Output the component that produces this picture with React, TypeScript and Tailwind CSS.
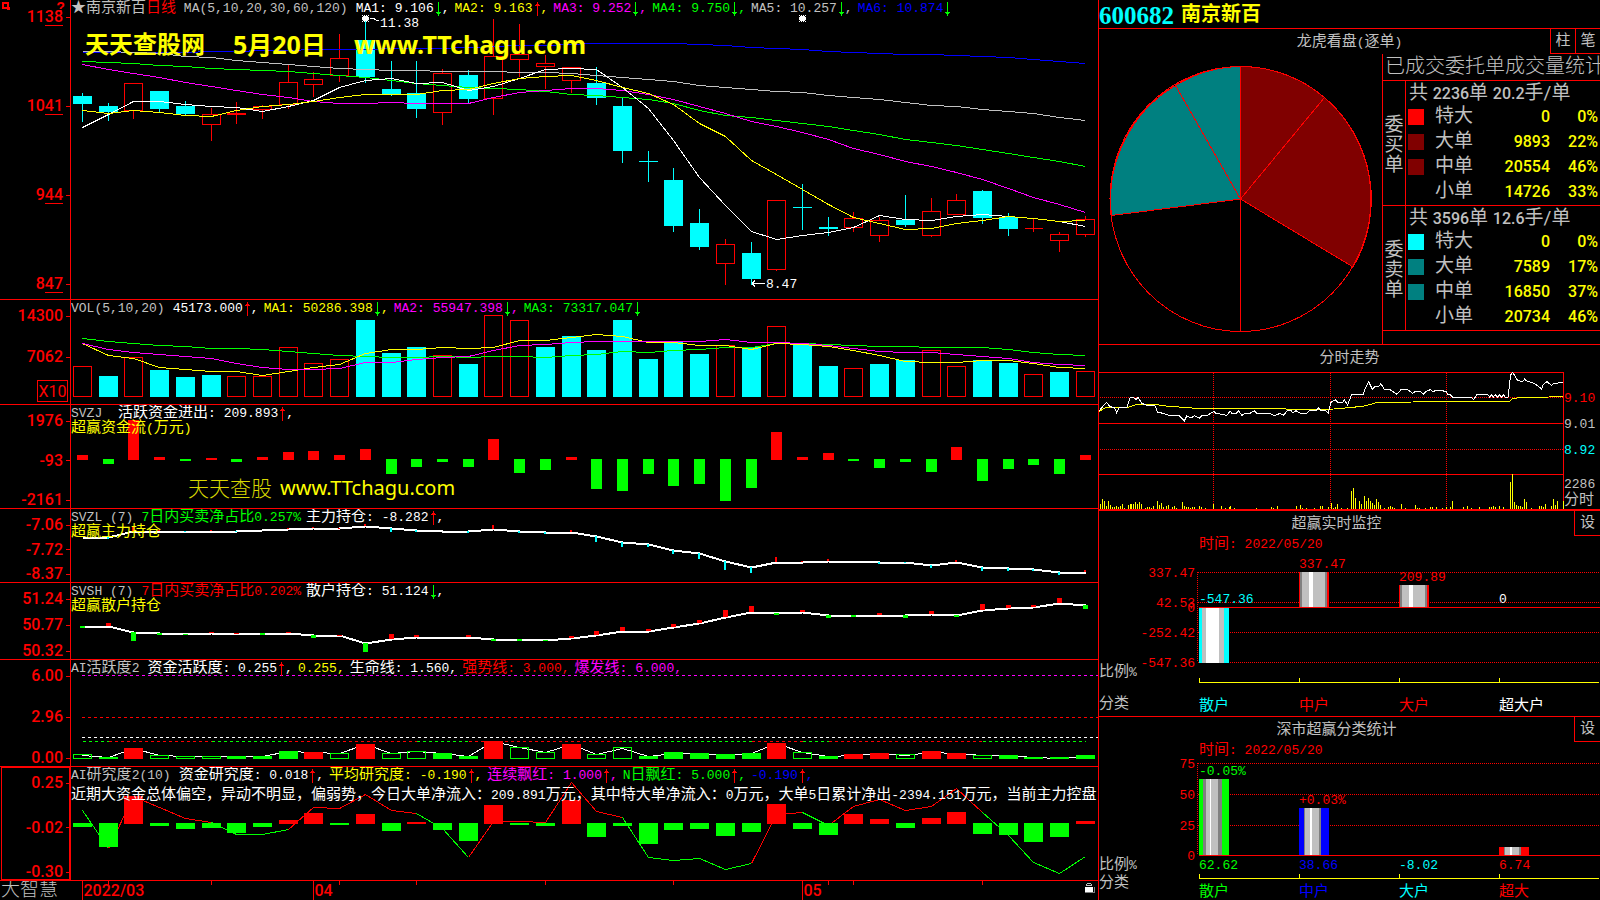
import type { ReactNode } from "react";

const RED = "#ff0000";
const GREEN = "#00ff00";
const CYAN = "#00ffff";
const YELLOW = "#ffff00";
const MAGENTA = "#ff00ff";
const BLUE = "#0000ff";
const GRAY = "#c0c0c0";
const WHITE = "#ffffff";

// Plot area: 40 bars spread over 1027 units, starting right of the axis column
const LEFT = 71;
const WIDTH = 1027;
const barX = (i: number) => Math.round(82 + 25.715 * i) + 0.5;

// Levels are stored in thirds of a row, counted from the top of a band of panels
const level = (origin: number) => (v: number) => Math.round(origin + v / 3);
const priceY = level(0);
const flowY = level(295);
const aiY = level(580);

// [hollow/filled, high, top, bottom, low]
const candles: [string, number, number, number, number][] = [
  ["c", 93, 96, 104, 121], ["c", 103, 106, 112, 120], ["r", 83, 83, 110, 118], ["c", 91, 91, 109, 111],
  ["c", 101, 106, 114, 115], ["r", 108, 114, 124, 140], ["r", 102, 113, 114, 123], ["r", 105, 106, 109, 118],
  ["r", 65, 82, 104, 108], ["r", 72, 79, 84, 96], ["r", 34, 58, 75, 81], ["c", 21, 40, 77, 82],
  ["c", 61, 89, 94, 95], ["c", 61, 93, 109, 117], ["r", 69, 73, 112, 124], ["c", 70, 75, 99, 102],
  ["r", 19, 56, 98, 114], ["r", 24, 54, 59, 76], ["r", 55, 63, 66, 88], ["r", 67, 67, 80, 92],
  ["c", 67, 83, 98, 104], ["c", 98, 106, 151, 162], ["c", 151, 161, 162, 181], ["c", 168, 180, 226, 231],
  ["c", 209, 223, 247, 249], ["r", 239, 244, 263, 284], ["c", 242, 253, 279, 284], ["r", 200, 200, 269, 270],
  ["c", 184, 207, 208, 229], ["c", 217, 227, 229, 235], ["r", 212, 218, 227, 231], ["r", 217, 220, 235, 241],
  ["c", 195, 220, 225, 226], ["r", 198, 211, 235, 236], ["r", 194, 200, 214, 214], ["c", 190, 191, 218, 223],
  ["c", 213, 217, 229, 235], ["r", 218, 228, 228, 231], ["r", 232, 234, 240, 251], ["r", 216, 219, 234, 236],
];

const priceMa: [string, number[]][] = [
  [BLUE, [157, 157, 157, 156, 155, 154, 152, 150, 149, 148, 147, 146, 145, 144, 143, 142, 139, 136, 135, 131, 130, 130, 130, 130, 132, 134, 140, 143, 148, 152, 155, 158, 161, 163, 166, 169, 172, 178, 183, 190]],
  [GRAY, [152, 154, 157, 160, 167, 172, 179, 187, 193, 199, 203, 208, 209, 211, 212, 213, 214, 216, 217, 220, 224, 230, 236, 244, 254, 260, 266, 272, 276, 285, 292, 298, 307, 314, 319, 326, 333, 340, 350, 360]],
  [GREEN, [184, 187, 190, 196, 199, 203, 206, 210, 213, 220, 226, 232, 240, 250, 256, 261, 265, 268, 272, 281, 286, 292, 298, 310, 330, 344, 352, 359, 368, 379, 391, 403, 418, 427, 436, 446, 458, 470, 483, 498]],
  [MAGENTA, [193, 207, 220, 232, 247, 258, 270, 282, 291, 303, 309, 310, 307, 310, 310, 308, 290, 276, 271, 265, 265, 271, 281, 298, 319, 338, 364, 378, 397, 418, 443, 463, 484, 499, 517, 536, 563, 590, 613, 637]],
  [WHITE, [382, 343, 303, 304, 312, 318, 320, 334, 317, 299, 262, 241, 235, 250, 247, 270, 258, 235, 208, 205, 206, 262, 325, 420, 530, 616, 693, 718, 705, 695, 680, 646, 657, 661, 647, 642, 648, 654, 663, 677]],
  [YELLOW, [331, 340, 331, 335, 346, 349, 331, 319, 311, 304, 292, 281, 283, 283, 270, 266, 248, 235, 229, 226, 240, 260, 280, 312, 368, 408, 480, 522, 566, 612, 650, 670, 688, 685, 670, 661, 647, 655, 664, 660]],
];

const volume =
  "r214 c243 r187 c225 c246 c240 r244 r244 r157 r205 r193 c75 c174 c156 r181 c207 r61 r76 c156 c123 c165 c75 c192 c140 c177 r151 c156 r94 c150 c213 r220 c207 c195 r166 r214 c195 c204 r238 c231 r229";

const volumeMa: [string, number[]][] = [
  [GREEN, [130, 139, 143, 151, 154, 159, 160, 163, 167, 175, 181, 182, 187, 187, 184, 186, 184, 184, 187, 181, 177, 169, 172, 166, 162, 156, 155, 145, 145, 146, 150, 154, 154, 157, 157, 157, 163, 171, 176, 181]],
  [YELLOW, [145, 180, 190, 215, 222, 228, 229, 240, 227, 217, 208, 175, 163, 162, 157, 160, 157, 136, 135, 125, 118, 122, 142, 141, 151, 149, 163, 145, 148, 152, 166, 180, 199, 202, 201, 196, 196, 204, 216, 220]],
  [MAGENTA, [143, 162, 172, 178, 184, 188, 205, 217, 223, 221, 220, 202, 202, 193, 187, 184, 166, 149, 147, 142, 139, 139, 139, 139, 139, 133, 142, 142, 144, 150, 160, 169, 170, 172, 178, 182, 188, 201, 208, 211]],
];

const flow =
  "r480 g507 r375 r486 g498 r489 g501 r486 r471 r468 r480 r462 g537 g516 g501 g516 r432 g534 g525 r486 g582 g588 g537 g573 g567 g618 g579 r411 r486 r474 g498 g519 g501 g531 r456 g558 g522 g510 g537 r480";

const mainLine = [725, 725, 708, 708, 708, 708, 708, 706, 703, 699, 698, 694, 699, 706, 707, 709, 701, 707, 711, 710, 724, 740, 748, 764, 775, 799, 816, 801, 801, 797, 799, 801, 801, 810, 802, 815, 820, 823, 831, 831];
const mainTicks =
  "1c731 2r696 3r705 4c711 5r705 6c711 8r699 9r696 10r701 11r687 12c711 13c711 15c713 16r690 17c713 18c716 19r706 20c741 21c756 22c756 23c777 24c792 25c825 26c834 27r786 28r798 29r792 31c807 32c805 33c819 34r795 35c828 36c828 37c827 38c840 39r825";

const retailLine = [138, 138, 157, 160, 162, 160, 159, 160, 159, 165, 165, 189, 177, 171, 170, 170, 176, 178, 180, 175, 165, 154, 152, 142, 130, 112, 95, 100, 95, 104, 105, 105, 105, 101, 106, 89, 83, 80, 68, 75];
const retailTicks =
  "0g143 1r129 2g183 3g164 4g165 5r156 6r158 7g164 8r156 9g173 10r165 11g215 12r162 13r165 15r165 16g182 17g182 18g183 19r168 20r153 21r141 22r147 23r132 24r120 25r90 26r78 27g104 28r90 29g114 30g110 31r99 32g114 33r93 34g110 35r72 36r75 37r75 38r54 39g87";

// o = outlined green
const activity =
  "o523 g531 r504 o526 o529 o529 g528 g528 g513 r516 o520 r492 o520 o514 g519 g528 r483 o502 o517 r492 o523 o502 g528 g516 g519 g522 g519 r489 o517 g528 r522 r519 o523 r513 r519 o526 g525 g531 g531 g525";
const activityLine = [525, 531, 505, 525, 529, 529, 529, 529, 514, 516, 519, 492, 519, 514, 519, 528, 483, 502, 517, 492, 522, 503, 528, 518, 519, 524, 519, 489, 515, 527, 524, 519, 524, 516, 519, 526, 525, 531, 533, 527];

const research =
  "g741 g801 r648 g738 g747 g744 g759 g741 r720 r699 g735 r702 g753 r726 g750 g783 r675 g735 g738 r660 g771 g738 g792 g750 g747 g768 g756 r672 g747 g765 r702 r717 g744 r714 r696 g762 g765 g786 g771 r723";
const researchLine = [690, 803, 648, 682, 715, 727, 763, 763, 748, 682, 685, 643, 690, 700, 744, 832, 722, 722, 727, 607, 693, 712, 832, 841, 835, 868, 848, 702, 697, 735, 679, 658, 691, 679, 625, 697, 765, 847, 878, 828];

// Trend colour changes at these bars, green first
const turns = [0, 1, 5, 8, 13, 15, 21, 26, 28, 29, 35, 39];

const minutePrice =
  "10,212 20,200 32,187 42,200 55,203 62,218 70,203 92,203 103,172 112,172 120,178 126,172 137,190 150,195 178,198 184,216 193,218 220,226 250,228 265,243 272,228 285,234 295,227 310,235 318,227 335,226 353,214 360,220 393,226 402,213 408,220 420,220 428,213 438,226 447,220 462,220 475,212 482,220 520,220 535,227 553,220 562,226 574,212 585,212 590,218 600,212 613,220 632,220 640,212 660,212 668,204 675,211 690,213 697,219 705,187 718,179 725,187 740,187 745,180 755,195 767,163 802,163 806,150 818,125 829,148 838,139 848,139 855,131 865,148 882,149 903,163 915,149 935,149 950,160 958,154 973,154 982,163 990,154 1003,149 1012,155 1020,150 1050,154 1056,163 1062,163 1070,172 1126,172 1133,178 1142,165 1175,164 1182,172 1186,165 1192,171 1198,164 1205,171 1212,164 1216,172 1222,164 1228,172 1236,172 1244,105 1250,97 1265,122 1280,124 1286,117 1292,123 1315,130 1337,147 1342,133 1353,125 1367,137 1372,130 1402,128";
const minuteAvg =
  "10,214 28,203 95,202 120,194 180,194 210,198 260,202 300,205 540,206 600,208 715,207 770,202 805,198 845,187 950,186 1240,184 1250,176 1275,172 1360,171 1402,169";
const minuteVol =
  "13,16 19,31 25,24 31,10 37,25 43,13 49,7 55,7 61,10 67,5 73,9 80,14 86,4 97,13 103,16 106,16 112,16 118,22 124,16 130,22 136,16 148,4 154,7 160,7 166,4 172,9 184,25 190,13 196,18 203,7 210,10 217,13 229,7 235,10 241,4 259,22 265,10 271,7 277,7 283,4 289,7 295,7 310,10 316,7 328,4 352,15 377,9 389,4 401,7 404,10 415,4 481,4 526,7 532,4 544,9 601,9 613,13 619,4 631,4 655,4 673,9 679,10 697,7 706,19 712,4 718,7 724,16 736,4 754,4 767,55 772,64 778,34 790,25 796,16 805,40 811,25 817,34 823,25 829,19 835,13 841,31 847,22 853,13 865,4 877,7 883,10 889,7 895,4 916,16 928,4 958,13 964,4 970,4 988,4 1003,7 1009,7 1021,7 1039,4 1051,7 1063,7 1069,25 1102,7 1114,10 1126,4 1150,7 1180,7 1186,7 1192,9 1198,5 1210,9 1222,5 1243,82 1249,106 1255,22 1261,13 1267,10 1273,10 1279,7 1285,31 1291,22 1306,4 1330,10 1336,10 1342,7 1348,16 1366,10 1372,31 1378,13 1384,25 1402,25";

const pairs = (s: string) => s.split(" ").map(p => p.split(",").map(Number));
const bars = (s: string) => s.split(" ").map(p => ({ kind: p[0], v: Number(p.slice(1)) }));
const CJK = /([★\u2e80-\u9fff\uff00-\uffef]+)/;
const ink: Record<string, string> = { r: RED, g: GREEN, o: GREEN, c: CYAN };

/* ---------- text ---------- */

function Mixed({ children }: { children: string }) {
  return (
    <>
      {children.split(CJK).map((part, i) =>
        i % 2 ? <span key={i} className="text-[15px]">{part}</span> : part
      )}
    </>
  );
}

function Arrow({ dir }: { dir: "up" | "down" }) {
  return (
    <svg width="8" height="14" viewBox="0 0 8 14" className="inline-block shrink-0" shapeRendering="crispEdges">
      {dir === "up" ? (
        <path d="M4 0h1v14h-1zM3 2h3v1h-3zM2 3h5v1h-5z" fill={RED} />
      ) : (
        <path d="M4 0h1v14h-1zM3 11h3v1h-3zM2 10h5v1h-5z" fill={GREEN} />
      )}
    </svg>
  );
}

interface LegendItem {
  text: string;
  color: string;
  dir?: "up" | "down";
  end?: string;
}

function Legend({ name, items }: { name: ReactNode; items: LegendItem[] }) {
  return (
    <div className="flex items-center whitespace-pre leading-[15px]">
      <span className="mr-2 text-[#c0c0c0]">{name}</span>
      {items.map((it, i) => (
        <span key={i} className="mr-[5px] flex items-center" style={{ color: it.color }}>
          <span><Mixed>{it.text}</Mixed></span>
          {it.dir && <Arrow dir={it.dir} />}
          {it.end ?? ","}
        </span>
      ))}
    </div>
  );
}

/* ---------- left side ---------- */

function AxisLabel({ children, underline }: { children: string; underline?: boolean }) {
  return (
    <div className="flex items-center justify-end gap-[3px]">
      <span className="relative font-['Roboto',sans-serif] text-[16px] font-medium leading-4">
        {children}
        {underline && <span className="absolute -bottom-px right-0 h-px w-[18px] bg-[#ff0000]" />}
      </span>
      <span className="h-px w-1 bg-[#ff0000]" />
    </div>
  );
}

interface PanelProps {
  top: number;
  height: string;
  rows: number;
  axis: ReactNode;
  axisClass?: string;
  legend: ReactNode;
  children: ReactNode;
}

function Panel({ top, height, rows, axis, axisClass = "justify-between pt-2", legend, children }: PanelProps) {
  return (
    <section className={`flex border-b border-[#ff0000] ${height}`}>
      <div className={`relative flex w-[71px] shrink-0 flex-col border-r border-[#ff0000] text-[#ff0000] ${axisClass}`}>
        {axis}
      </div>
      <div className="relative min-w-0 flex-1 overflow-hidden">
        <svg
          className="block h-full w-full"
          viewBox={`${LEFT} ${top} ${WIDTH} ${rows}`}
          preserveAspectRatio="none"
          shapeRendering="crispEdges"
        >
          {children}
        </svg>
        <div className="absolute left-0 top-px">{legend}</div>
      </div>
    </section>
  );
}

function Line({ data, y, color, width = 1 }: { data: number[]; y: (v: number) => number; color: string; width?: number }) {
  return (
    <polyline
      points={data.map((v, i) => `${barX(i)},${y(v) + 0.5}`).join(" ")}
      fill="none"
      stroke={color}
      strokeWidth={width}
    />
  );
}

function Column({ i, top, bottom, kind, w = 19 }: { i: number; top: number; bottom: number; kind: string; w?: number }) {
  return <rect x={barX(i) - w / 2} y={top} width={w} height={Math.max(1, bottom - top)} fill={ink[kind]} />;
}

function Outline({ i, top, bottom, color, fill = "none" }: { i: number; top: number; bottom: number; color: string; fill?: string }) {
  return <rect x={barX(i) - 9} y={top + 0.5} width={18} height={Math.max(0, bottom - top - 1)} fill={fill} stroke={color} />;
}

function Ticks({ data, line, y, w }: { data: string; line: number[]; y: (v: number) => number; w: number }) {
  return (
    <>
      {data.split(" ").map(t => {
        const [, idx, kind, end] = t.match(/(\d+)([a-z])(\d+)/)!;
        const i = Number(idx);
        const a = y(line[i]);
        const b = y(Number(end));
        const top = Math.min(a, b);
        return <rect key={i} x={Math.floor(barX(i) - w / 2)} y={top} width={w} height={Math.max(1, Math.abs(a - b))} fill={ink[kind]} />;
      })}
    </>
  );
}

function Sun({ x, y }: { x: number; y: number }) {
  return (
    <path
      d={`M${x - 2} ${y - 2}h5v5h-5zM${x - 3} ${y - 1}h7v3h-7zM${x - 1} ${y - 3}h1v7h-1zM${x + 1} ${y - 3}h1v7h-1zM${x - 3} ${y - 3}h1v1h-1zM${x + 3} ${y - 3}h1v1h-1zM${x - 3} ${y + 3}h1v1h-1zM${x + 3} ${y + 3}h1v1h-1z`}
      fill={WHITE}
    />
  );
}

function PricePanel() {
  return (
    <Panel
      top={0}
      rows={299}
      height="h-[300px]"
      axisClass="justify-between pb-[7px] pt-[9px]"
      axis={
        <>
          <svg className="absolute left-[2px] top-[2px]" width="8" height="8" viewBox="0 0 8 8" shapeRendering="crispEdges">
            <path d="M1 1h5v5h-5zM6 6h1v1h-1z" fill="none" stroke={RED} strokeWidth="2" />
          </svg>
          <span className="absolute right-[5px] top-0 text-[14px] font-bold leading-4">?</span>
          <AxisLabel underline>1138</AxisLabel>
          <AxisLabel underline>1041</AxisLabel>
          <AxisLabel underline>944</AxisLabel>
          <AxisLabel underline>847</AxisLabel>
        </>
      }
      legend={
        <>
          <Legend
            name={
              <>
                <Mixed>★南京新百</Mixed>
                <span className="text-[15px] text-[#ff0000]">日线</span> MA(5,10,20,30,60,120)
              </>
            }
            items={[
              { text: "MA1: 9.106", color: WHITE, dir: "down" },
              { text: "MA2: 9.163", color: YELLOW, dir: "up" },
              { text: "MA3: 9.252", color: MAGENTA, dir: "down" },
              { text: "MA4: 9.750", color: GREEN, dir: "down" },
              { text: "MA5: 10.257", color: GRAY, dir: "down" },
              { text: "MA6: 10.874", color: BLUE, dir: "down", end: "" },
            ]}
          />
          <div className="mt-3 flex gap-7 whitespace-pre pl-[14px] font-['Noto_Sans','Noto_Sans_CJK_SC',sans-serif] text-[25px] font-bold leading-8 text-[#ffff00]">
            <span className="text-[24px]">天天查股网</span>
            <span>5月20日</span>
            <span>www.TTchagu.com</span>
          </div>
        </>
      }
    >
      {candles.map(([kind, high, top, bottom, low], i) => (
        <g key={i}>
          <path d={`M${barX(i)} ${high}V${low + 1}`} stroke={ink[kind]} />
          {kind === "c" ? (
            <Column i={i} top={top} bottom={bottom} kind="c" />
          ) : (
            <Outline i={i} top={top} bottom={bottom + 1} color={RED} fill="#000" />
          )}
        </g>
      ))}
      {/* flat session: the body is a plain cross stroke */}
      <path d={`M${barX(37) - 9} 228.500h18`} stroke={RED} />
      {priceMa.map(([color, data]) => <Line key={color} data={data} y={priceY} color={color} />)}
      <Sun x={365} y={18} />
      <Sun x={802} y={18} />
      <path d="M370 18h3l3 2h3" stroke={WHITE} fill="none" />
      <text x="380" y="27" fill={WHITE}>11.38</text>
      <path d="M752 283.500h13M752 283.500l3 -3M752 283.500l3 3" stroke={WHITE} fill="none" />
      <text x="766" y="288" fill={WHITE}>8.47</text>
    </Panel>
  );
}

function VolumePanel() {
  return (
    <Panel
      top={300}
      rows={104}
      height="h-[105px]"
      axisClass="pt-2"
      axis={
        <>
          <AxisLabel>14300</AxisLabel>
          <div className="mt-[25px]"><AxisLabel>7062</AxisLabel></div>
          <div className="mr-[2px] mt-[15px] h-[22px] w-[31px] self-end border border-[#ff0000] text-center font-['Roboto',sans-serif] text-[16px] leading-[22px]">
            X10
          </div>
        </>
      }
      legend={
        <Legend
          name="VOL(5,10,20)"
          items={[
            { text: "45173.000", color: WHITE, dir: "up" },
            { text: "MA1: 50286.398", color: YELLOW, dir: "down" },
            { text: "MA2: 55947.398", color: MAGENTA, dir: "down" },
            { text: "MA3: 73317.047", color: GREEN, dir: "down", end: "" },
          ]}
        />
      }
    >
      {bars(volume).map(({ kind, v }, i) =>
        kind === "c" ? (
          <Column key={i} i={i} top={flowY(v)} bottom={397} kind="c" />
        ) : (
          <Outline key={i} i={i} top={flowY(v - 1)} bottom={397} color={RED} />
        )
      )}
      {volumeMa.map(([color, data]) => <Line key={color} data={data} y={flowY} color={color} />)}
    </Panel>
  );
}

function FlowPanel() {
  return (
    <Panel
      top={405}
      rows={103}
      height="h-[104px]"
      axis={
        <>
          <AxisLabel>1976</AxisLabel>
          <AxisLabel>-93</AxisLabel>
          <AxisLabel>-2161</AxisLabel>
        </>
      }
      legend={
        <>
          <Legend name="SVZJ " items={[{ text: "活跃资金进出: 209.893", color: WHITE, dir: "up" }]} />
          <div className="leading-[15px] text-[#ffff00]"><Mixed>超赢资金流(万元)</Mixed></div>
          <div className="mt-[38px] flex items-center gap-2 pl-[117px] font-['Noto_Sans','Noto_Sans_CJK_SC',sans-serif] text-[21px] leading-7 text-[#ffff00]">
            <span className="font-light text-[#d8d800]">天天查股</span>
            <span className="text-[20px]">www.TTchagu.com</span>
          </div>
        </>
      }
    >
      {bars(flow).map(({ kind, v }, i) => (
        <Column
          key={i}
          i={i}
          top={kind === "r" ? flowY(v) : 459}
          bottom={kind === "r" ? 460 : flowY(v)}
          kind={kind}
          w={11}
        />
      ))}
    </Panel>
  );
}

function MainHoldPanel() {
  return (
    <Panel
      top={509}
      rows={73}
      height="h-[74px]"
      axis={
        <>
          <AxisLabel>-7.06</AxisLabel>
          <AxisLabel>-7.72</AxisLabel>
          <AxisLabel>-8.37</AxisLabel>
        </>
      }
      legend={
        <>
          <Legend
            name="SVZL (7)"
            items={[
              { text: "7日内买卖净占比0.257%", color: GREEN, end: "" },
              { text: "主力持仓: -8.282", color: WHITE, dir: "up" },
            ]}
          />
          <div className="leading-[15px] text-[#ffff00]"><Mixed>超赢主力持仓</Mixed></div>
        </>
      }
    >
      <Line data={mainLine} y={flowY} color={WHITE} width={2} />
      <Ticks data={mainTicks} line={mainLine} y={flowY} w={2} />
    </Panel>
  );
}

function RetailHoldPanel() {
  return (
    <Panel
      top={583}
      rows={76}
      height="h-[77px]"
      axis={
        <>
          <AxisLabel>51.24</AxisLabel>
          <AxisLabel>50.77</AxisLabel>
          <AxisLabel>50.32</AxisLabel>
        </>
      }
      legend={
        <>
          <Legend
            name="SVSH (7)"
            items={[
              { text: "7日内买卖净占比0.202%", color: RED, end: "" },
              { text: "散户持仓: 51.124", color: WHITE, dir: "down" },
            ]}
          />
          <div className="leading-[15px] text-[#ffff00]"><Mixed>超赢散户持仓</Mixed></div>
        </>
      }
    >
      <Line data={retailLine} y={aiY} color={WHITE} width={2} />
      <Ticks data={retailTicks} line={retailLine} y={aiY} w={5} />
    </Panel>
  );
}

function ActivityPanel() {
  return (
    <Panel
      top={660}
      rows={106}
      height="h-[107px]"
      axis={
        <>
          <AxisLabel>6.00</AxisLabel>
          <AxisLabel>2.96</AxisLabel>
          <AxisLabel>0.00</AxisLabel>
        </>
      }
      legend={
        <Legend
          name={<Mixed>AI活跃度2</Mixed>}
          items={[
            { text: "资金活跃度: 0.255", color: WHITE, dir: "up" },
            { text: "0.255", color: YELLOW },
            { text: "生命线: 1.560", color: WHITE },
            { text: "强势线: 3.000", color: RED },
            { text: "爆发线: 6.000", color: MAGENTA },
          ]}
        />
      }
    >
      <g strokeDasharray="3 3">
        <path d="M82 675.500H1098" stroke={MAGENTA} />
        <path d="M82 717.500H1098" stroke={RED} />
        <path d="M82 737.500H1098" stroke={WHITE} />
        {turns.slice(1).map((t, i) => (
          <path key={t} d={`M${barX(turns[i])} 741.500H${barX(t)}`} stroke={i % 2 ? RED : GREEN} />
        ))}
      </g>
      <Line data={activityLine} y={aiY} color={WHITE} />
      {bars(activity).map(({ kind, v }, i) =>
        kind === "o" ? (
          <Outline key={i} i={i} top={aiY(v - 1)} bottom={759} color={GREEN} />
        ) : (
          <Column key={i} i={i} top={aiY(v)} bottom={759} kind={kind} />
        )
      )}
    </Panel>
  );
}

function ResearchPanel() {
  return (
    <Panel
      top={767}
      rows={113}
      height="h-[114px]"
      axis={
        <>
          <span className="absolute inset-y-0 left-[1px] right-0 border border-[#ff0000]" />
          <AxisLabel>0.25</AxisLabel>
          <AxisLabel>-0.02</AxisLabel>
          <AxisLabel>-0.30</AxisLabel>
        </>
      }
      legend={
        <>
          <Legend
            name={<Mixed>AI研究度2(10)</Mixed>}
            items={[
              { text: "资金研究度: 0.018", color: WHITE, dir: "up" },
              { text: "平均研究度: -0.190", color: YELLOW, dir: "up" },
              { text: "连续飘红: 1.000", color: MAGENTA, dir: "up" },
              { text: "N日飘红: 5.000", color: GREEN, dir: "up" },
              { text: "-0.190", color: BLUE, dir: "up" },
            ]}
          />
          <div className="mt-[5px] whitespace-nowrap leading-[15px] text-white">
            <Mixed>近期大资金总体偏空，异动不明显，偏弱势，今日大单净流入：209.891万元，其中特大单净流入：0万元，大单5日累计净出-2394.151万元，当前主力控盘</Mixed>
          </div>
        </>
      }
    >
      {turns.slice(1).map((t, i) => (
        <polyline
          key={t}
          points={researchLine
            .slice(turns[i], t + 1)
            .map((v, k) => `${barX(turns[i] + k)},${aiY(v) + 0.5}`)
            .join(" ")}
          fill="none"
          stroke={i % 2 ? RED : GREEN}
        />
      ))}
      {bars(research).map(({ kind, v }, i) => (
        <Column
          key={i}
          i={i}
          top={kind === "r" ? aiY(v) : 823}
          bottom={kind === "r" ? 824 : aiY(v)}
          kind={kind}
        />
      ))}
    </Panel>
  );
}

function Timeline() {
  const months: [number, string][] = [[0, "2022/03"], [9, "04"], [28, "05"]];
  return (
    <footer className="flex h-[19px] overflow-hidden">
      <div className="w-[71px] shrink-0 whitespace-nowrap pl-px text-[19px] font-light leading-5 text-[#c0c0c0]">大智慧</div>
      <div className="min-w-0 flex-1">
        <svg className="block h-full w-full" viewBox={`${LEFT} 881 ${WIDTH} 19`} preserveAspectRatio="none" shapeRendering="crispEdges">
          {[1, 5, 10, 13, 18, 23, 29, 30, 35].map(i => (
            <path key={i} d={`M${barX(i)} 881v4`} stroke={RED} />
          ))}
          {months.map(([i, name]) => (
            <g key={name}>
              <path d={`M${barX(i)} 881v19`} stroke={RED} />
              <text x={barX(i) + 1} y="896" fill={RED} className="font-['Roboto',sans-serif] text-[16px] font-medium">{name}</text>
            </g>
          ))}
          <path d="M1087 883h4v1h-4zM1086 884h1v2h-1zM1091 884h1v2h-1zM1087 885h4v1h-4z" fill={GRAY} />
          <path d="M1085 887h8v5h-8z" fill={WHITE} />
          <path d="M1093 887h2v6h-10v-1h9v-5z" fill="#808080" />
        </svg>
      </div>
    </footer>
  );
}

/* ---------- right side ---------- */

function Pie() {
  const c = "141.500 145";
  const arc = "A130.500 132.500 0 0 1";
  return (
    <svg width="283" height="290" viewBox="0 0 283 290" className="shrink-0" stroke={RED} fill="none" shapeRendering="crispEdges">
      <path d={`M${c}L141.500 12.500${arc} 225.500 43.500Z`} fill="#800000" />
      <path d={`M${c}L225.500 43.500${arc} 254 213Z`} fill="#800000" />
      <path d={`M${c}L12.500 161.500${arc} 76.500 31.500Z`} fill="#008080" />
      <path d={`M${c}L76.500 31.500${arc} 141.500 12.500Z`} fill="#008080" />
      <ellipse cx="141.500" cy="145" rx="130.500" ry="132.500" />
      <path d={`M${c}V277.500M${c}L12.500 161.500`} />
    </svg>
  );
}

interface OrderProps {
  side: string[];
  count: string;
  average: string;
  rows: [string, string, string, string][];
}

function Num({ children }: { children: string }) {
  return <span className="font-['Roboto',sans-serif] text-[16px] font-medium">{children}</span>;
}

function Orders({ side, count, average, rows }: OrderProps) {
  return (
    <div className="flex h-[125px] border-b border-[#ff0000] text-[19px] leading-5">
      <div className="flex w-[23px] shrink-0 flex-col items-center justify-center border-r border-[#ff0000] pt-[5px]">
        {side.map(s => <span key={s}>{s}</span>)}
      </div>
      <div className="min-w-0 flex-1">
        <table className="w-full table-fixed border-collapse">
          <caption className="h-[23px] whitespace-nowrap pl-[3px] text-left font-['Roboto','Noto_Sans_CJK_SC',sans-serif] leading-6">
            共 <Num>{count}</Num>单 <Num>{average}</Num>手/单
          </caption>
          <colgroup>
            <col className="w-[29px]" />
            <col className="w-[50px]" />
            <col />
            <col className="w-[50px]" />
          </colgroup>
          <tbody>
            {rows.map(([name, qty, pct, color]) => (
              <tr key={name} className="h-[25px]">
                <td className="pl-[2px]">
                  <span className="block h-4 w-4" style={{ background: color }} />
                </td>
                <td className="leading-[22px]">{name}</td>
                <td className="text-right leading-[22px] text-[#ffff00]"><Num>{qty}</Num></td>
                <td className="pr-[2px] text-right leading-[22px] text-[#ffff00]"><Num>{pct}</Num></td>
              </tr>
            ))}
          </tbody>
        </table>
      </div>
    </div>
  );
}

function MinuteChart() {
  const x = (v: number) => v / 3 - 3;
  const y = (v: number) => v / 3 - 32;
  const pts = (s: string) => pairs(s).map(([a, b]) => `${x(a)},${y(b)}`).join(" ");
  return (
    <section className="border-b-2 border-[#ff0000]">
      <h2 className="h-[27px] text-center leading-[27px] text-[#c0c0c0]"><Mixed>分时走势</Mixed></h2>
      <div className="flex">
        <svg width="465" height="137" viewBox="0 0 465 137" className="shrink-0" shapeRendering="crispEdges" fill="none">
          <g stroke={RED}>
            <path d="M0 .5H465M0 51.500H464M0 102.500H464M464.500 0V137" />
            <path d="M1 25.500H464M1 77.500H464M114.500 1V137M231.500 1V137M347.500 1V137" strokeDasharray="1 1" />
          </g>
          {pairs(minuteVol).map(([a, h]) => (
            <rect key={a} x={Math.floor(x(a))} y={137 - Math.round(h / 3)} width="1" height={Math.round(h / 3)} fill={YELLOW} />
          ))}
          <polyline points={pts(minuteAvg)} stroke={YELLOW} />
          <polyline points={pts(minutePrice)} stroke={WHITE} />
        </svg>
        <div className="flex flex-col pt-[19px] leading-4 text-[#c0c0c0]">
          <span className="text-[#ff0000]">9.10</span>
          <span className="mt-[10px]">9.01</span>
          <span className="mt-[10px] text-[#00ffff]">8.92</span>
          <span className="mt-[18px]">2286</span>
          <span className="text-[15px]">分时</span>
        </div>
      </div>
    </section>
  );
}

function ChartText({ x, y, color, end, children }: { x: number; y: number; color: string; end?: boolean; children: string }) {
  return (
    <text x={x} y={y + 4} fill={color} textAnchor={end ? "end" : "start"} className="whitespace-pre">
      {children.split(CJK).map((part, i) => (i % 2 ? <tspan key={i} fontSize="15">{part}</tspan> : part))}
    </text>
  );
}

// stripes: [offset, width, colour] drawn over the base colour
function Cylinder({ x, top, bottom, base, stripes }: { x: number; top: number; bottom: number; base: string; stripes: [number, number, string][] }) {
  return (
    <g>
      <rect x={x} y={top} width="30" height={bottom - top} fill={base} />
      {stripes.map(([o, w, c]) => <rect key={o} x={x + o} y={top} width={w} height={bottom - top} fill={c} />)}
    </g>
  );
}

const wide: [number, number, string][] = [[1, 2, "#808080"], [3, 7, GRAY], [10, 4, WHITE], [14, 12, GRAY], [26, 2, "#808080"]];
const narrow: [number, number, string][] = [[5, 1, "#808080"], [6, 5, GRAY], [11, 2, WHITE], [13, 7, GRAY], [20, 2, "#808080"]];

function StatSection({ title, className, children }: { title: string; className: string; children: ReactNode }) {
  return (
    <section className={className}>
      <div className="flex h-[25px]">
        <h2 className="flex-1 text-center leading-7 text-[#c0c0c0]"><Mixed>{title}</Mixed></h2>
        <button className="w-[26px] border-b border-l border-[#ff0000] pt-[2px] text-[15px] leading-[22px] text-[#c0c0c0]">设</button>
      </div>
      {children}
    </section>
  );
}

function Monitor() {
  return (
    <StatSection title="超赢实时监控" className="border-b border-[#ff0000]">
      <svg width="501" height="180" viewBox="1099 536 501 180" className="block" shapeRendering="crispEdges" fill="none">
        <ChartText x={1199} y={544} color={RED}>时间: 2022/05/20</ChartText>
        <path d="M1198 572.500H1600M1198 602.500H1600M1198 632.500H1600M1198 662.500H1600M1197.500 572V662" stroke={RED} strokeDasharray="1 1" />
        <ChartText x={1195} y={573} color={RED} end>337.47</ChartText>
        <ChartText x={1195} y={603} color={RED} end>42.53</ChartText>
        <ChartText x={1195} y={608} color={RED} end>0</ChartText>
        <ChartText x={1195} y={633} color={RED} end>-252.42</ChartText>
        <ChartText x={1195} y={663} color={RED} end>-547.36</ChartText>
        <Cylinder x={1199} top={608} bottom={663} base={CYAN} stripes={[[3, 4, GRAY], [7, 13, WHITE], [20, 5, GRAY]]} />
        <Cylinder x={1299} top={572} bottom={607} base={RED} stripes={wide} />
        <Cylinder x={1399} top={585} bottom={607} base={RED} stripes={wide} />
        <path d="M1199 607.500H1600" stroke={RED} />
        <ChartText x={1199} y={599} color={CYAN}>-547.36</ChartText>
        <ChartText x={1299} y={564} color={RED}>337.47</ChartText>
        <ChartText x={1399} y={577} color={RED}>209.89</ChartText>
        <ChartText x={1499} y={599} color={WHITE}>0</ChartText>
        <path d="M1199.500 678V682.500H1599M1299.500 678v4M1399.500 678v4M1499.500 678v4" stroke={YELLOW} />
        <ChartText x={1099} y={672} color={GRAY}>比例%</ChartText>
        <ChartText x={1099} y={704} color={GRAY}>分类</ChartText>
        <ChartText x={1199} y={706} color={CYAN}>散户</ChartText>
        <ChartText x={1299} y={706} color={RED}>中户</ChartText>
        <ChartText x={1399} y={706} color={RED}>大户</ChartText>
        <ChartText x={1499} y={706} color={WHITE}>超大户</ChartText>
      </svg>
    </StatSection>
  );
}

function Classes() {
  return (
    <StatSection title="深市超赢分类统计" className="">
      <svg width="501" height="158" viewBox="1099 742 501 158" className="block" shapeRendering="crispEdges" fill="none">
        <ChartText x={1199} y={750} color={RED}>时间: 2022/05/20</ChartText>
        <path d="M1198 763.500H1600M1198 794.500H1600M1198 825.500H1600M1197.500 763V855" stroke={RED} strokeDasharray="1 1" />
        <ChartText x={1195} y={764} color={RED} end>75</ChartText>
        <ChartText x={1195} y={795} color={RED} end>50</ChartText>
        <ChartText x={1195} y={826} color={RED} end>25</ChartText>
        <ChartText x={1195} y={856} color={RED} end>0</ChartText>
        <Cylinder x={1199} top={779} bottom={855} base={GREEN} stripes={[[4, 3, "#808080"], [7, 4, GRAY], [11, 1, WHITE], [12, 7, GRAY], [19, 4, "#808080"]]} />
        <Cylinder x={1299} top={808} bottom={855} base={BLUE} stripes={narrow} />
        <Cylinder x={1499} top={847} bottom={855} base={RED} stripes={narrow} />
        <path d="M1199 855.500H1600" stroke={RED} />
        <ChartText x={1199} y={771} color={GREEN}>-0.05%</ChartText>
        <ChartText x={1299} y={800} color={RED}>+0.03%</ChartText>
        <ChartText x={1199} y={865} color={GREEN}>62.62</ChartText>
        <ChartText x={1299} y={865} color={BLUE}>38.66</ChartText>
        <ChartText x={1399} y={865} color={CYAN}>-8.02</ChartText>
        <ChartText x={1499} y={865} color={RED}>6.74</ChartText>
        <path d="M1199.500 874V878.500H1599M1299.500 874v4M1399.500 874v4M1499.500 874v4" stroke={YELLOW} />
        <ChartText x={1099} y={865} color={GRAY}>比例%</ChartText>
        <ChartText x={1099} y={883} color={GRAY}>分类</ChartText>
        <ChartText x={1199} y={892} color={GREEN}>散户</ChartText>
        <ChartText x={1299} y={892} color={BLUE}>中户</ChartText>
        <ChartText x={1399} y={892} color={CYAN}>大户</ChartText>
        <ChartText x={1499} y={892} color={RED}>超大</ChartText>
      </svg>
    </StatSection>
  );
}

export default function App() {
  return (
    <div className="flex min-h-screen bg-black font-['Liberation_Mono','Noto_Sans_CJK_SC',monospace] text-[13px]">
      <main className="min-w-0 flex-1 border-r border-[#ff0000]">
        <PricePanel />
        <VolumePanel />
        <FlowPanel />
        <MainHoldPanel />
        <RetailHoldPanel />
        <ActivityPanel />
        <ResearchPanel />
        <Timeline />
      </main>

      <aside className="w-[501px] shrink-0 overflow-hidden text-[#c0c0c0]">
        <h1 className="flex h-[29px] items-center gap-[7px] border-b border-[#ff0000] pt-1 font-bold">
          <span className="font-['Liberation_Serif',serif] text-[25px] leading-6 text-[#00ffff]">600682</span>
          <span className="text-[20px] leading-6 text-[#ffff00]">南京新百</span>
        </h1>

        <section className="border-b border-[#ff0000]">
          <div className="relative h-[25px]">
            <h2 className="text-center leading-7"><Mixed>龙虎看盘(逐单)</Mixed></h2>
            <div className="absolute right-0 top-0 flex h-[25px] border-b border-[#ff0000] text-[15px]">
              <button className="w-[25px] border-l border-[#ff0000] pt-[2px] leading-[22px]">柱</button>
              <button className="w-[25px] border-l border-[#ff0000] pt-[2px] leading-[22px]">笔</button>
            </div>
          </div>
          <div className="flex">
            <Pie />
            <div className="min-w-0 flex-1 overflow-hidden border-l border-[#ff0000]">
              <h3 className="h-[27px] whitespace-nowrap border-b border-[#ff0000] pl-[2px] text-[20px] font-light leading-7">
                已成交委托单成交量统计
              </h3>
              <Orders
                side={["委", "买", "单"]}
                count="2236"
                average="20.2"
                rows={[
                  ["特大", "0", "0%", "#ff0000"],
                  ["大单", "9893", "22%", "#800000"],
                  ["中单", "20554", "46%", "#800000"],
                  ["小单", "14726", "33%", "#000000"],
                ]}
              />
              <Orders
                side={["委", "卖", "单"]}
                count="3596"
                average="12.6"
                rows={[
                  ["特大", "0", "0%", "#00ffff"],
                  ["大单", "7589", "17%", "#008080"],
                  ["中单", "16850", "37%", "#008080"],
                  ["小单", "20734", "46%", "#000000"],
                ]}
              />
            </div>
          </div>
        </section>

        <MinuteChart />
        <Monitor />
        <Classes />
      </aside>
    </div>
  );
}
